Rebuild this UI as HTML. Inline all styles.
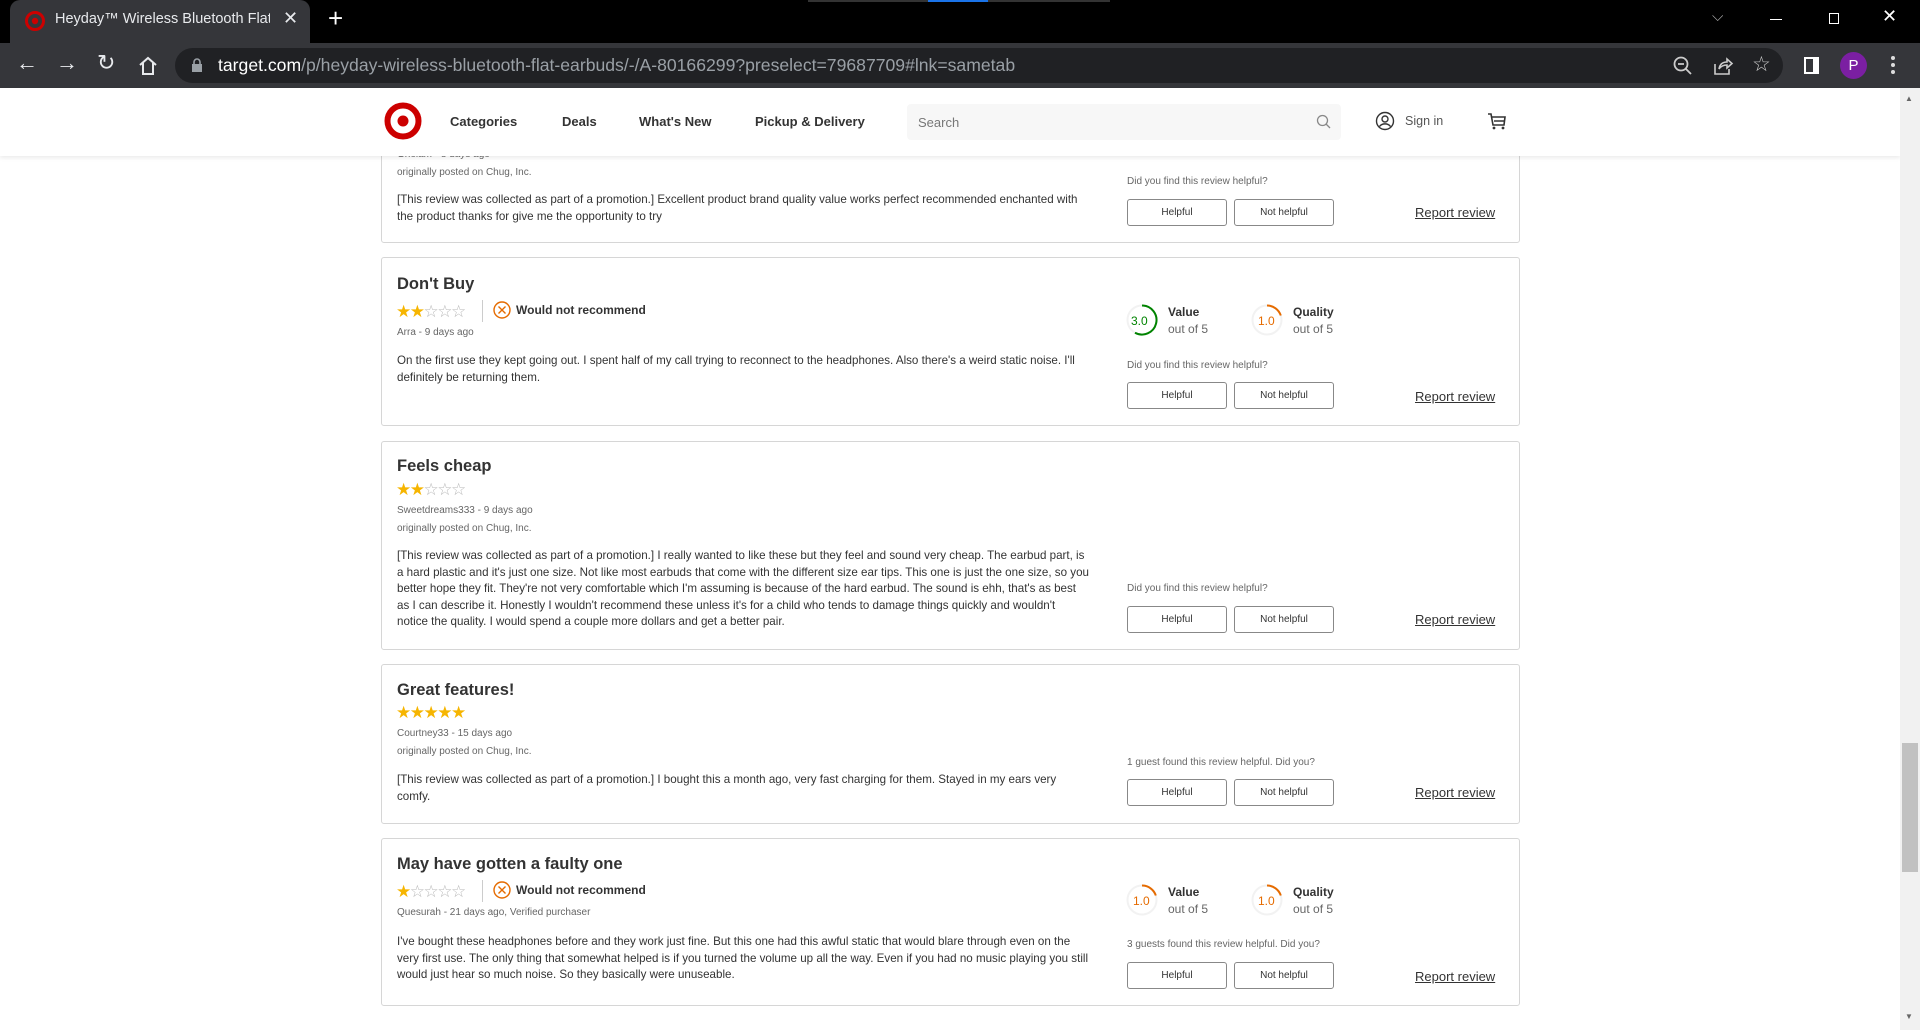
<!DOCTYPE html>
<html><head><meta charset="utf-8"><style>
*{margin:0;padding:0;box-sizing:border-box}
body{width:1920px;height:1030px;overflow:hidden;background:#fff;font-family:"Liberation Sans",Arial,sans-serif;position:relative;color:#333}
.a{position:absolute;white-space:nowrap}
.card{position:absolute;left:381px;width:1139px;border:1px solid #d6d6d6;border-radius:3px;background:#fff}
.t{font-size:16.5px;font-weight:bold;color:#333}
.sm{font-size:10px;color:#666}
.body{font-size:11.6px;color:#333;line-height:16.6px;white-space:normal;width:692px}
.btn{position:absolute;width:100px;height:27px;border:1px solid #888;border-radius:3px;font-size:10px;color:#333;text-align:center;line-height:25px;background:#fff}
.rep{font-size:13px;color:#333;text-decoration:underline}
.stars{font-size:17px;letter-spacing:-1.5px;color:#bbb}
.stars b{color:#f6b500;font-weight:normal}
.lbl{font-size:12px;font-weight:bold;color:#333}
.oo{font-size:12px;color:#666}
.sep{position:absolute;width:1px;height:22px;background:#ccc}
</style></head><body>
<div class="a" style="left:0;top:0;width:1920px;height:43px;background:#000"></div>
<div class="a" style="left:808px;top:0;width:302px;height:2px;background:#333"></div>
<div class="a" style="left:928px;top:0;width:60px;height:2px;background:#1a73e8"></div>
<div class="a" style="left:10px;top:0;width:300px;height:43px;background:#35363a;border-radius:10px 10px 0 0"></div>
<svg class="a" style="left:25px;top:11px" width="20" height="20"><circle cx="10" cy="10" r="8.5" fill="none" stroke="#cc0000" stroke-width="3"/><circle cx="10" cy="10" r="3.2" fill="#cc0000"/></svg>
<div class="a" style="left:55px;top:11px;font-size:14.5px;color:#e8eaed;width:215px;overflow:hidden">Heyday™ Wireless Bluetooth Flat</div>
<div class="a" style="left:283px;top:8px;font-size:18px;color:#e8eaed">✕</div>
<div class="a" style="left:328px;top:3px;font-size:26px;color:#fff">+</div>
<div class="a" style="left:1712px;top:8px;font-size:15px;color:#aaa">⌵</div>
<div class="a" style="left:1770px;top:19px;width:12px;height:1px;background:#fff"></div>
<div class="a" style="left:1829px;top:13px;width:10px;height:11px;border:1px solid #fff"></div>
<div class="a" style="left:1882px;top:6px;font-size:18px;color:#fff">✕</div>
<div class="a" style="left:0;top:43px;width:1920px;height:45px;background:#35363a"></div>
<div class="a" style="left:16px;top:50px;font-size:22px;color:#e8eaed">←</div>
<div class="a" style="left:56px;top:50px;font-size:22px;color:#e8eaed">→</div>
<div class="a" style="left:97px;top:50px;font-size:22px;color:#e8eaed">↻</div>
<svg class="a" style="left:137px;top:55px" width="22" height="22"><path d="M3 10 L11 3 L19 10 M6 8 V19 H16 V8" fill="none" stroke="#e8eaed" stroke-width="2"/></svg>
<div class="a" style="left:175px;top:48px;width:1608px;height:35px;background:#202124;border-radius:18px"></div>
<svg class="a" style="left:191px;top:58px" width="12" height="15"><rect x="1" y="6" width="10" height="8" fill="#9aa0a6"/><path d="M3 6 V4 a3 3 0 0 1 6 0 V6" fill="none" stroke="#9aa0a6" stroke-width="1.6"/></svg>
<div class="a" style="left:218px;top:55px;font-size:17.6px;color:#fff">target.com<span style="color:#9aa0a6">/p/heyday-wireless-bluetooth-flat-earbuds/-/A-80166299?preselect=79687709#lnk=sametab</span></div>
<svg class="a" style="left:1672px;top:55px" width="22" height="22"><circle cx="9" cy="9" r="6.5" fill="none" stroke="#ccc" stroke-width="1.8"/><path d="M6 9 H12 M14 14 L19 19" stroke="#ccc" stroke-width="1.8"/></svg>
<svg class="a" style="left:1712px;top:55px" width="22" height="22"><path d="M3 9 V19 H17 V14 M7 14 C8 8 12 7 15 7 V4 L20 8.5 L15 13 V10 C12 10 9 11 7 14" fill="none" stroke="#ccc" stroke-width="1.6"/></svg>
<div class="a" style="left:1752px;top:52px;font-size:21px;color:#ccc">☆</div>
<div class="a" style="left:1804px;top:57px;width:15px;height:17px;border:2px solid #fff;border-right-width:6px"></div>
<div class="a" style="left:1840px;top:52px;width:27px;height:27px;border-radius:50%;background:#7b1fa2;color:#fff;font-size:15px;text-align:center;line-height:27px">P</div>
<div class="a" style="left:1891px;top:56px;width:4px;height:4px;border-radius:2px;background:#ddd;box-shadow:0 7px 0 #ddd,0 14px 0 #ddd"></div>
<div class="a" style="left:0;top:88px;width:1900px;height:68px;background:#fff;box-shadow:0 2px 4px rgba(0,0,0,.08);z-index:5">
<svg class="a" style="left:384px;top:14px" width="38" height="38"><circle cx="19" cy="19" r="15.5" fill="none" stroke="#cc0000" stroke-width="6"/><circle cx="19" cy="19" r="5.5" fill="#cc0000"/></svg>
<div class="a" style="left:450px;top:26px;font-size:13px;font-weight:bold;color:#333">Categories</div>
<div class="a" style="left:562px;top:26px;font-size:13px;font-weight:bold;color:#333">Deals</div>
<div class="a" style="left:639px;top:26px;font-size:13px;font-weight:bold;color:#333">What's New</div>
<div class="a" style="left:755px;top:26px;font-size:13px;font-weight:bold;color:#333">Pickup &amp; Delivery</div>
<div class="a" style="left:907px;top:16px;width:434px;height:36px;background:#f7f7f7;border-radius:4px"></div>
<div class="a" style="left:918px;top:27px;font-size:13px;color:#777">Search</div>
<svg class="a" style="left:1316px;top:26px" width="16" height="16"><circle cx="6.5" cy="6.5" r="5" fill="none" stroke="#888" stroke-width="1.3"/><path d="M10 10 L14 14" stroke="#888" stroke-width="1.3"/></svg>
<svg class="a" style="left:1375px;top:23px" width="20" height="20"><circle cx="10" cy="10" r="8.5" fill="none" stroke="#333" stroke-width="1.4"/><circle cx="10" cy="8" r="3" fill="none" stroke="#333" stroke-width="1.4"/><path d="M4.5 15.5 C7 12 13 12 15.5 15.5" fill="none" stroke="#333" stroke-width="1.4"/></svg>
<div class="a" style="left:1405px;top:26px;font-size:12.5px;color:#555">Sign in</div>
<svg class="a" style="left:1486px;top:23px" width="22" height="20"><path d="M2 3 H5 L7 14 H18 L19 6 H6 M8 10 H18" fill="none" stroke="#333" stroke-width="1.6"/><circle cx="8" cy="17" r="1.4" fill="#333"/><circle cx="17" cy="17" r="1.4" fill="#333"/></svg>
</div>
<div class="card" style="top:120px;height:123px"></div>
<div class="a sm" style="left:397px;top:149px">Gholam - 8 days ago</div>
<div class="a sm" style="left:397px;top:167px">originally posted on Chug, Inc.</div>
<div class="a body" style="left:397px;top:192px">[This review was collected as part of a promotion.] Excellent product brand quality value works perfect recommended enchanted with the product thanks for give me the opportunity to try</div>
<div class="a sm" style="left:1127px;top:176px">Did you find this review helpful?</div>
<div class="btn" style="left:1127px;top:199px">Helpful</div>
<div class="btn" style="left:1234px;top:199px">Not helpful</div>
<div class="a rep" style="left:1415px;top:205px">Report review</div>
<div class="card" style="top:257px;height:169px"></div>
<div class="a t" style="left:397px;top:275px">Don't Buy</div>
<div class="a stars" style="left:396px;top:302px"><b>★★</b>☆☆☆</div>
<div class="sep" style="left:482px;top:300px"></div>
<svg class="a" style="left:493px;top:301px" width="18" height="18"><circle cx="9" cy="9" r="8" fill="none" stroke="#e56b00" stroke-width="1.4"/><path d="M5.5 5.5 L12.5 12.5 M12.5 5.5 L5.5 12.5" stroke="#e56b00" stroke-width="1.4"/></svg>
<div class="a" style="left:516px;top:303px;font-size:12px;font-weight:bold;color:#333">Would not recommend</div>
<div class="a sm" style="left:397px;top:327px">Arra - 9 days ago</div>
<div class="a body" style="left:397px;top:353px">On the first use they kept going out. I spent half of my call trying to reconnect to the headphones. Also there's a weird static noise. I'll definitely be returning them.</div>
<svg class="a" style="left:1126px;top:304px" width="32" height="32"><circle cx="16" cy="16" r="14.5" fill="none" stroke="#f2f2f2" stroke-width="2"/><path d="M16 1.5 A14.5 14.5 0 1 1 9 28.7" fill="none" stroke="#008300" stroke-width="2"/></svg>
<div class="a" style="left:1131px;top:314px;font-size:12px;color:#008300">3.0</div>
<div class="a lbl" style="left:1168px;top:305px">Value</div>
<div class="a oo" style="left:1168px;top:322px">out of 5</div>
<svg class="a" style="left:1251px;top:304px" width="32" height="32"><circle cx="16" cy="16" r="14.5" fill="none" stroke="#f2f2f2" stroke-width="2"/><path d="M16 1.5 A14.5 14.5 0 0 1 29.8 11.5" fill="none" stroke="#e56b00" stroke-width="2"/></svg>
<div class="a" style="left:1258px;top:314px;font-size:12px;color:#e56b00">1.0</div>
<div class="a lbl" style="left:1293px;top:305px">Quality</div>
<div class="a oo" style="left:1293px;top:322px">out of 5</div>
<div class="a sm" style="left:1127px;top:360px">Did you find this review helpful?</div>
<div class="btn" style="left:1127px;top:382px">Helpful</div>
<div class="btn" style="left:1234px;top:382px">Not helpful</div>
<div class="a rep" style="left:1415px;top:389px">Report review</div>
<div class="card" style="top:441px;height:209px"></div>
<div class="a t" style="left:397px;top:457px">Feels cheap</div>
<div class="a stars" style="left:396px;top:480px"><b>★★</b>☆☆☆</div>
<div class="a sm" style="left:397px;top:505px">Sweetdreams333 - 9 days ago</div>
<div class="a sm" style="left:397px;top:523px">originally posted on Chug, Inc.</div>
<div class="a body" style="left:397px;top:548px">[This review was collected as part of a promotion.] I really wanted to like these but they feel and sound very cheap. The earbud part, is a hard plastic and it's just one size. Not like most earbuds that come with the different size ear tips. This one is just the one size, so you better hope they fit. They're not very comfortable which I'm assuming is because of the hard earbud. The sound is ehh, that's as best as I can describe it. Honestly I wouldn't recommend these unless it's for a child who tends to damage things quickly and wouldn't notice the quality. I would spend a couple more dollars and get a better pair.</div>
<div class="a sm" style="left:1127px;top:583px">Did you find this review helpful?</div>
<div class="btn" style="left:1127px;top:606px">Helpful</div>
<div class="btn" style="left:1234px;top:606px">Not helpful</div>
<div class="a rep" style="left:1415px;top:612px">Report review</div>
<div class="card" style="top:664px;height:160px"></div>
<div class="a t" style="left:397px;top:681px">Great features!</div>
<div class="a stars" style="left:396px;top:703px"><b>★★★★★</b></div>
<div class="a sm" style="left:397px;top:728px">Courtney33 - 15 days ago</div>
<div class="a sm" style="left:397px;top:746px">originally posted on Chug, Inc.</div>
<div class="a body" style="left:397px;top:772px">[This review was collected as part of a promotion.] I bought this a month ago, very fast charging for them. Stayed in my ears very comfy.</div>
<div class="a sm" style="left:1127px;top:757px">1 guest found this review helpful. Did you?</div>
<div class="btn" style="left:1127px;top:779px">Helpful</div>
<div class="btn" style="left:1234px;top:779px">Not helpful</div>
<div class="a rep" style="left:1415px;top:785px">Report review</div>
<div class="card" style="top:838px;height:168px"></div>
<div class="a t" style="left:397px;top:855px">May have gotten a faulty one</div>
<div class="a stars" style="left:396px;top:882px"><b>★</b>☆☆☆☆</div>
<div class="sep" style="left:482px;top:880px"></div>
<svg class="a" style="left:493px;top:881px" width="18" height="18"><circle cx="9" cy="9" r="8" fill="none" stroke="#e56b00" stroke-width="1.4"/><path d="M5.5 5.5 L12.5 12.5 M12.5 5.5 L5.5 12.5" stroke="#e56b00" stroke-width="1.4"/></svg>
<div class="a" style="left:516px;top:883px;font-size:12px;font-weight:bold;color:#333">Would not recommend</div>
<div class="a sm" style="left:397px;top:907px">Quesurah - 21 days ago, Verified purchaser</div>
<div class="a body" style="left:397px;top:934px">I've bought these headphones before and they work just fine. But this one had this awful static that would blare through even on the very first use. The only thing that somewhat helped is if you turned the volume up all the way. Even if you had no music playing you still would just hear so much noise. So they basically were unuseable.</div>
<svg class="a" style="left:1126px;top:884px" width="32" height="32"><circle cx="16" cy="16" r="14.5" fill="none" stroke="#f2f2f2" stroke-width="2"/><path d="M16 1.5 A14.5 14.5 0 0 1 29.8 11.5" fill="none" stroke="#e56b00" stroke-width="2"/></svg>
<div class="a" style="left:1133px;top:894px;font-size:12px;color:#e56b00">1.0</div>
<div class="a lbl" style="left:1168px;top:885px">Value</div>
<div class="a oo" style="left:1168px;top:902px">out of 5</div>
<svg class="a" style="left:1251px;top:884px" width="32" height="32"><circle cx="16" cy="16" r="14.5" fill="none" stroke="#f2f2f2" stroke-width="2"/><path d="M16 1.5 A14.5 14.5 0 0 1 29.8 11.5" fill="none" stroke="#e56b00" stroke-width="2"/></svg>
<div class="a" style="left:1258px;top:894px;font-size:12px;color:#e56b00">1.0</div>
<div class="a lbl" style="left:1293px;top:885px">Quality</div>
<div class="a oo" style="left:1293px;top:902px">out of 5</div>
<div class="a sm" style="left:1127px;top:939px">3 guests found this review helpful. Did you?</div>
<div class="btn" style="left:1127px;top:962px">Helpful</div>
<div class="btn" style="left:1234px;top:962px">Not helpful</div>
<div class="a rep" style="left:1415px;top:969px">Report review</div>
<div class="a" style="left:1900px;top:88px;width:20px;height:942px;background:#f1f1f1;z-index:6"></div>
<div class="a" style="left:1905px;top:94px;font-size:8px;color:#666;z-index:7">▲</div>
<div class="a" style="left:1905px;top:1012px;font-size:8px;color:#666;z-index:7">▼</div>
<div class="a" style="left:1902px;top:743px;width:16px;height:129px;background:#c1c1c1;z-index:7"></div>
</body></html>
